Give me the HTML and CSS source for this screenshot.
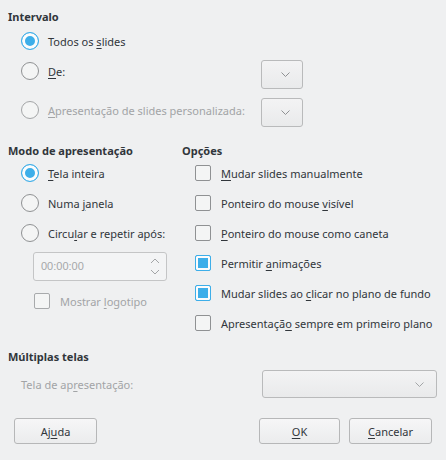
FILE: index.html
```html
<!DOCTYPE html>
<html lang="pt">
<head>
<meta charset="utf-8">
<link rel="stylesheet" href="styles.css">
</head>
<body>
<div class="dialog">
  <h2 class="head">Intervalo</h2>
  <div class="range">
    <div class="opt"><span class="radio on"></span><span>Todos os <u>s</u>lides</span></div>
    <div></div>
    <div class="opt r2"><span class="radio"></span><span><u>D</u>e:</span></div>
    <div class="combo small c2"><svg width="9" height="5" viewBox="0 0 9 5"><polyline points="0.5,0.5 4.5,4.5 8.5,0.5" fill="none" stroke="#8f9193" stroke-width="1"/></svg></div>
    <div class="opt r3 dis"><span class="radio"></span><span><u>A</u>presentação de slides personalizada:</span></div>
    <div class="combo small c3"><svg width="9" height="5" viewBox="0 0 9 5"><polyline points="0.5,0.5 4.5,4.5 8.5,0.5" fill="none" stroke="#8f9193" stroke-width="1"/></svg></div>
  </div>

  <div class="cols">
    <div class="col">
      <h2 class="head">Modo de apresentação</h2>
      <div class="row"><span class="radio on"></span><span><u>T</u>ela inteira</span></div>
      <div class="row"><span class="radio"></span><span>Numa <u>j</u>anela</span></div>
      <div class="row"><span class="radio"></span><span>Circu<u>l</u>ar e repetir após:</span></div>
      <div class="spin">
        <span class="spin-text">00:00:00</span>
        <svg width="10" height="17" viewBox="0 0 10 17"><polyline points="1,5 5,1 9,5" fill="none" stroke="#a3a5a7" stroke-width="1"/><polyline points="1,12 5,16 9,12" fill="none" stroke="#a3a5a7" stroke-width="1"/></svg>
      </div>
      <div class="row logo dis"><span class="check"></span><span>Mostrar <u>l</u>ogotipo</span></div>
    </div>
    <div class="col">
      <h2 class="head">Opções</h2>
      <div class="row"><span class="check"></span><span><u>M</u>udar slides manualmente</span></div>
      <div class="row"><span class="check"></span><span>Ponteiro do mouse <u>v</u>isível</span></div>
      <div class="row"><span class="check"></span><span><u>P</u>onteiro do mouse como caneta</span></div>
      <div class="row"><span class="check on"></span><span>Permitir <u>a</u>nimações</span></div>
      <div class="row"><span class="check on"></span><span>Mudar slides ao <u>c</u>licar no plano de fundo</span></div>
      <div class="row"><span class="check"></span><span>Apresentaçã<u>o</u> sempre em primeiro plano</span></div>
    </div>
  </div>

  <h2 class="head head-multi">Múltiplas telas</h2>
  <div class="screen">
    <span class="dis">Tela de ap<u>r</u>esentação:</span>
    <div class="combo wide"><svg width="9" height="5" viewBox="0 0 9 5"><polyline points="0.5,0.5 4.5,4.5 8.5,0.5" fill="none" stroke="#a3a5a7" stroke-width="1"/></svg></div>
  </div>

  <div class="buttons">
    <button class="btn">Aj<u>u</u>da</button>
    <div class="right">
      <button class="btn ok"><u>O</u>K</button>
      <button class="btn"><u>C</u>ancelar</button>
    </div>
  </div>
</div>
</body>
</html>
```
FILE: styles.css
```css
html, body {
  margin: 0;
  padding: 0;
  background: #eff0f1;
}
body {
  width: 446px;
  height: 460px;
  overflow: hidden;
  font-family: "Noto Sans", "DejaVu Sans", sans-serif;
  font-size: 11px;
  line-height: 15px;
  color: #31363b;
}
u {
  text-decoration: underline;
  text-underline-offset: 2px;
}
.dialog {
  padding-top: 9px;
}
.head {
  margin: 0;
  font-size: 11px;
  font-weight: bold;
  line-height: 15px;
  padding-left: 8px;
}
.col .head {
  padding-left: 0;
}
.range {
  display: grid;
  grid-template-columns: 240px 42px;
  grid-template-rows: 18px 40px 38px;
  margin-top: 8px;
  padding-left: 21px;
}
.range .r2, .range .r3 {
  align-self: start;
}
.range .r2 { margin-top: 12px; }
.range .r3 { margin-top: 11px; }
.range .c2 { margin-top: 10px; }
.range .c3 { margin-top: 8px; }
.opt, .row {
  display: flex;
  align-items: center;
  gap: 9px;
}
.dis {
  color: #a2a4a6;
}
.radio {
  box-sizing: border-box;
  width: 18px;
  height: 18px;
  flex: none;
  border-radius: 50%;
  border: 1px solid #8f9193;
  background: #f4f5f5;
}
.dis .radio {
  border-color: #a3a5a7;
}
.radio.on {
  border-color: #3daee9;
  background: #3daee9;
  box-shadow: inset 0 0 0 3px #fcfcfc;
}
.check {
  box-sizing: border-box;
  width: 16px;
  height: 16px;
  flex: none;
  border-radius: 2px;
  border: 1px solid #8f9193;
  background: #f4f5f5;
}
.dis .check {
  border-color: #a8aaac;
}
.check.on {
  border-color: #3daee9;
  background: #3daee9;
  box-shadow: inset 0 0 0 2px #fcfcfc;
}
.combo {
  box-sizing: border-box;
  display: flex;
  align-items: center;
  justify-content: flex-end;
  height: 30px;
  border: 1px solid #b9babb;
  border-radius: 3px;
  background: linear-gradient(#f3f3f4, #e9eaeb);
}
.combo.small {
  width: 42px;
  height: 29px;
  padding-right: 12px;
}
.cols {
  display: grid;
  grid-template-columns: 174px 1fr;
  margin-top: 15px;
  padding-left: 8px;
}
.col {
  display: flex;
  flex-direction: column;
}
.col .row {
  height: 30px;
  padding-left: 13px;
}
.col .row .check + span {
  margin-left: 1px;
}
.spin {
  box-sizing: border-box;
  display: flex;
  align-items: center;
  justify-content: space-between;
  width: 134px;
  height: 29px;
  margin-left: 25px;
  margin-top: 4px;
  padding: 0 6px 0 7px;
  border: 1px solid #c4c5c6;
  border-radius: 3px;
  background: #f3f4f5;
}
.spin-text {
  font-family: "Liberation Sans", Arial, sans-serif;
  font-size: 11px;
  color: #a5a7a9;
}
.col .row.logo {
  margin-top: 5px;
  padding-left: 26px;
}
.head-multi {
  margin-top: 11px;
}
.screen {
  display: flex;
  align-items: center;
  justify-content: space-between;
  margin-top: 6px;
  padding-left: 21px;
  padding-right: 9px;
}
.combo.wide {
  width: 175px;
  height: 28px;
  padding-right: 12px;
}
.buttons {
  display: flex;
  justify-content: space-between;
  margin-top: 20px;
  padding: 0 14px;
}
.right {
  display: flex;
  gap: 9px;
}
.btn {
  box-sizing: border-box;
  width: 83px;
  height: 26px;
  margin: 0;
  padding: 0;
  font-family: "Noto Sans", "DejaVu Sans", sans-serif;
  font-size: 11px;
  color: #31363b;
  border: 1px solid #b6b7b8;
  border-radius: 3px;
  background: linear-gradient(#f6f6f7, #ebeced);
}
.btn.ok {
  width: 81px;
}
```
